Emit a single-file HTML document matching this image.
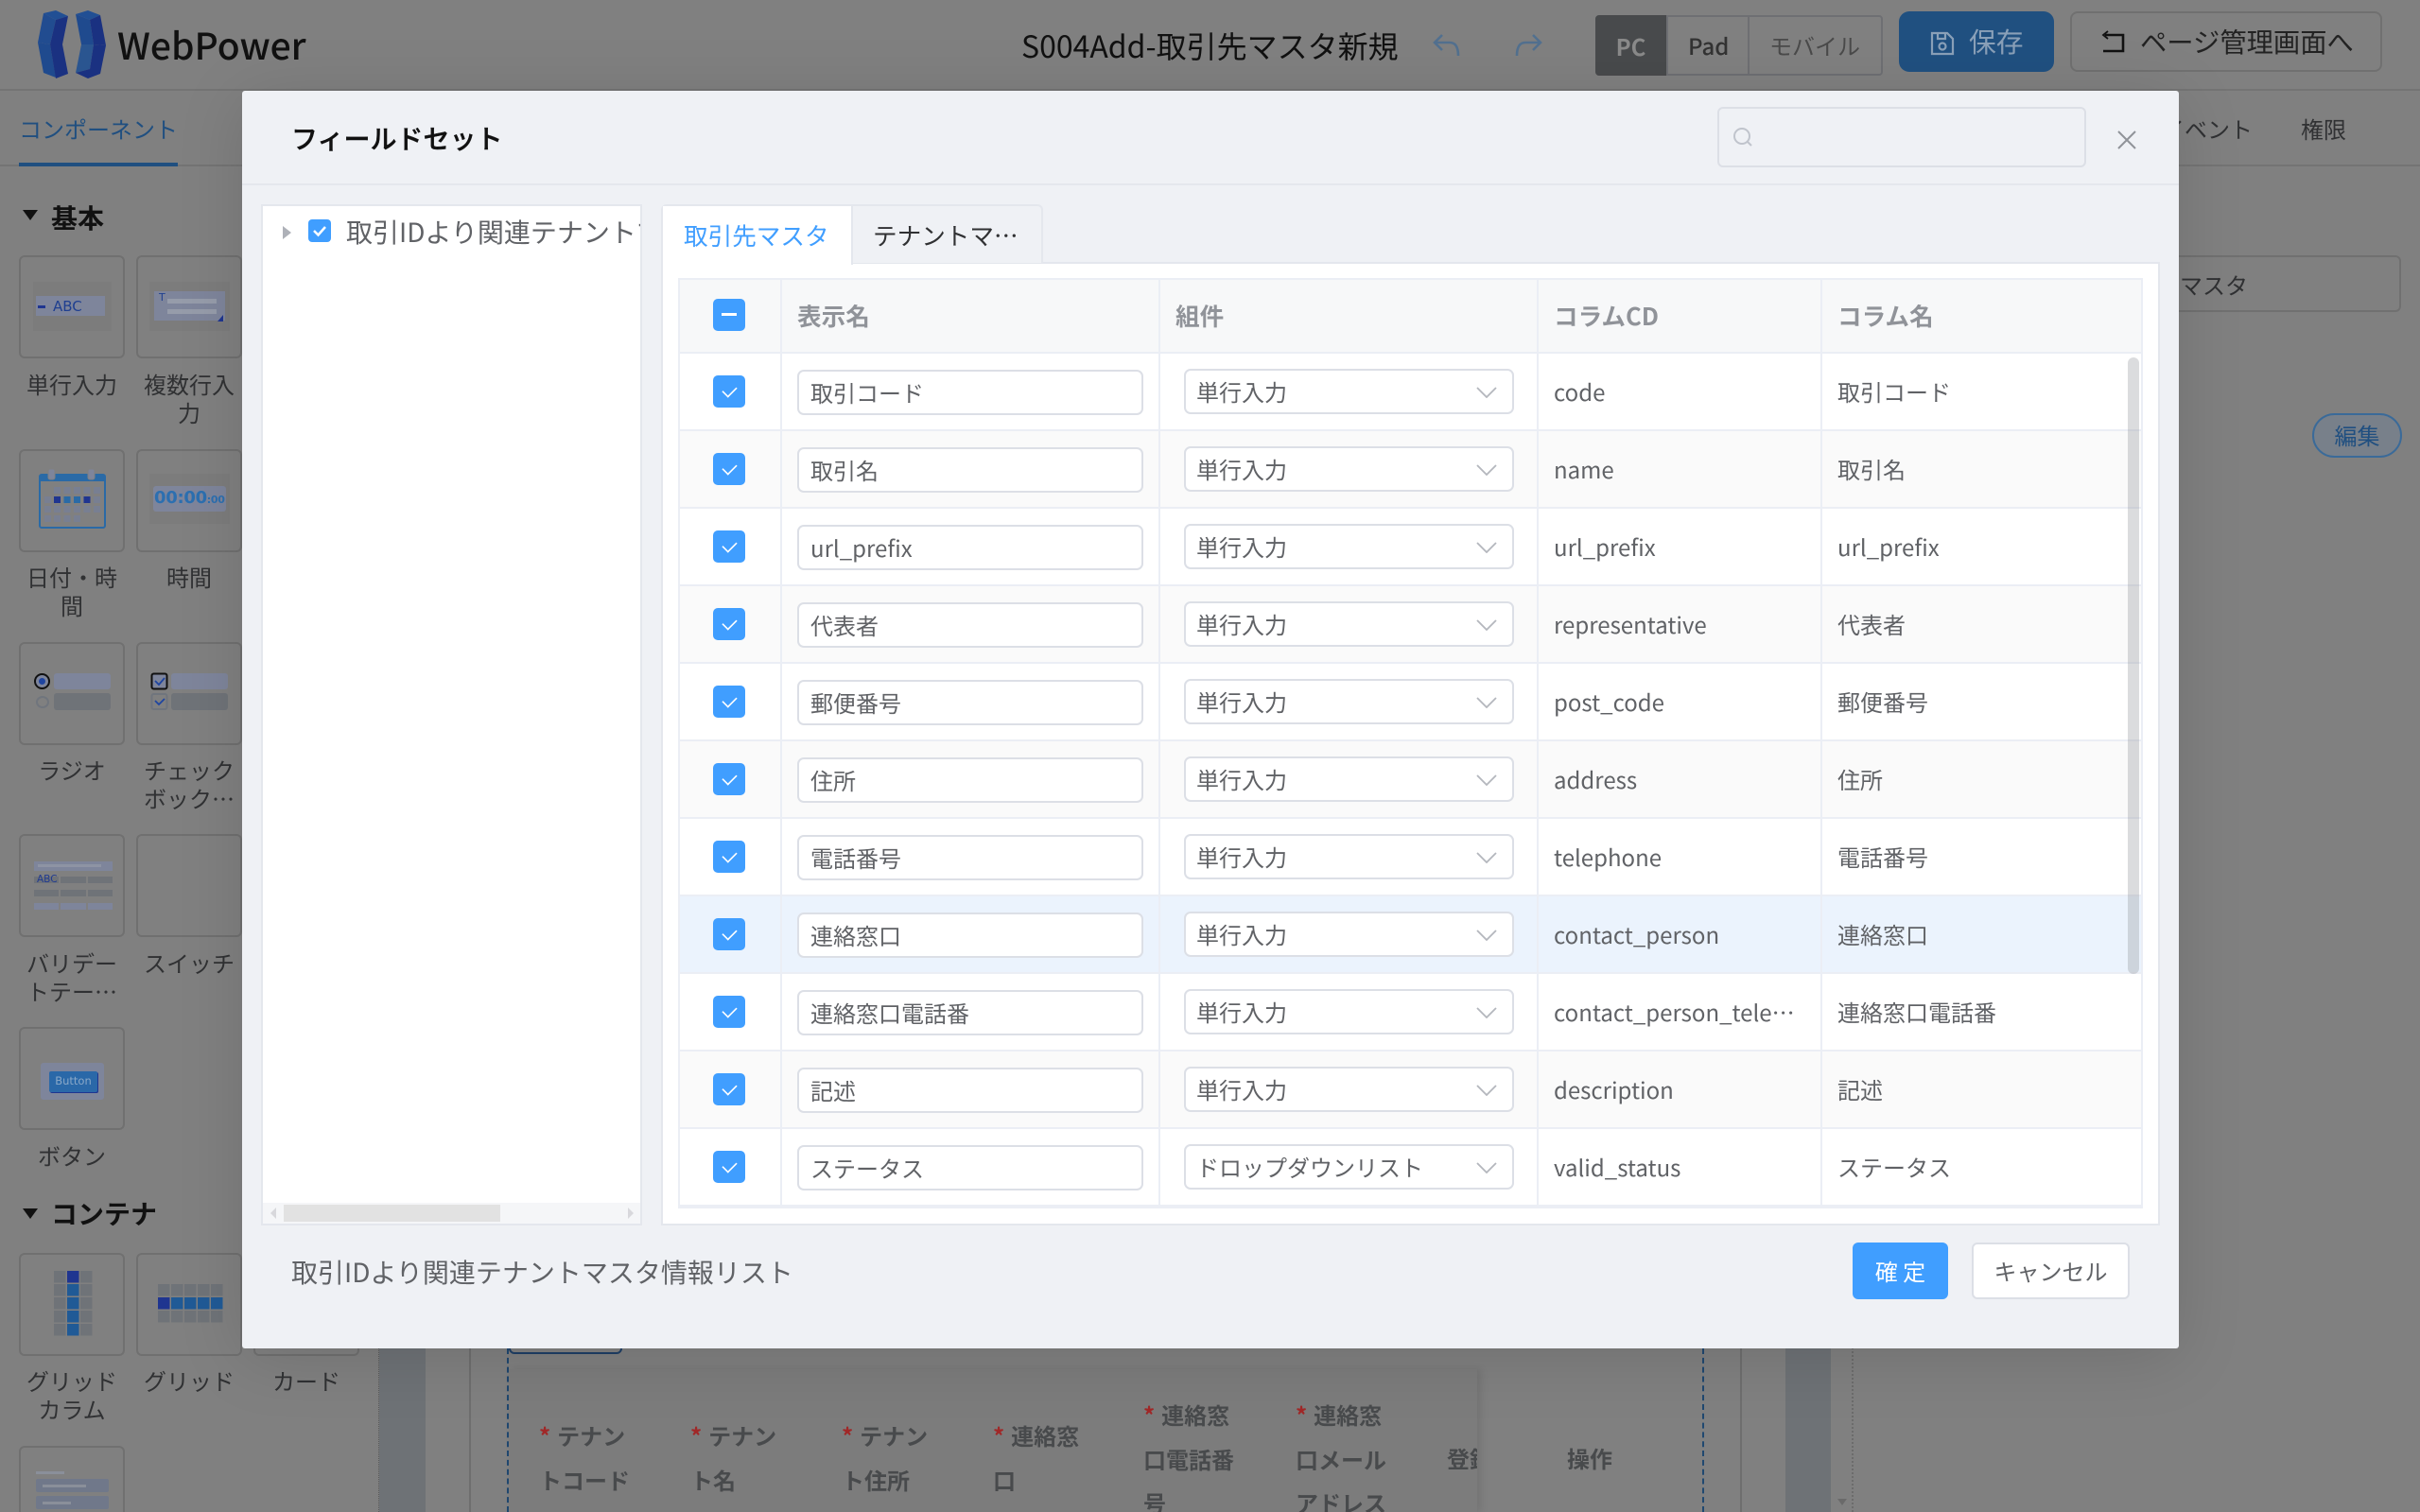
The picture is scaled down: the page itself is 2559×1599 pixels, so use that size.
<!DOCTYPE html>
<html lang="ja"><head><meta charset="utf-8"><title>WebPower</title>
<style>
*{box-sizing:border-box}
html,body{margin:0;padding:0;width:2559px;height:1599px;overflow:hidden;background:#808080}
body{font-family:"Noto Sans CJK JP","Liberation Sans",sans-serif;position:relative;color:#303133}
.a{position:absolute}
.t{position:absolute;white-space:nowrap;line-height:1}
.card{position:absolute;width:112px;height:109px;border:2px solid #707070;border-radius:6px}
.lb{position:absolute;width:112px;text-align:center;font-size:24px;line-height:30px;color:#303133}
.bl{background:#7e859b}.gr{background:#6f7378}
#modal{position:absolute;left:256px;top:96px;width:2048px;height:1330px;background:#eff1f5;border-radius:3px;box-shadow:0 10px 70px rgba(0,0,0,.13)}
table{position:absolute;left:717px;top:294px;width:1549px;border-collapse:separate;border-spacing:0;table-layout:fixed;border-top:2px solid #ebeef5;border-left:2px solid #ebeef5;border-right:2px solid #ebeef5;background:#fff}
th,td{padding:0 16px 2px;border-right:2px solid #ebeef5;border-bottom:2px solid #ebeef5;height:82px;font-size:24px;font-weight:400;color:#606266;text-align:left;white-space:nowrap;overflow:hidden;position:relative}
th:last-child,td:last-child{border-right:0}
th{height:78px;background:#f7f8f9;color:#909399;font-weight:700;font-size:25.6px}
tr.s td{background:#fafafa}
tr.h td{background:#ebf3fd}
.cb{position:absolute;left:35px;top:23px;width:34px;height:34px;border-radius:5px;background:#409eff}
.cb:after{content:"";position:absolute;left:12px;top:7px;width:9px;height:15px;border:solid #fff;border-width:0 2.5px 2.5px 0;transform:rotate(45deg) scale(.82)}
.cb.m{top:20px}
.cb.m:after{left:9px;top:15px;width:16px;height:3px;border:0;background:#fff;transform:none}
.in{position:absolute;left:16px;top:17px;width:366px;height:48px;border:2px solid #dcdfe6;border-radius:7px;background:#fff;font-size:24px;line-height:43px;padding-left:12px;color:#606266}
.se{position:absolute;left:25px;top:16px;width:349px;height:48px;border:2px solid #dcdfe6;border-radius:7px;background:#fff;font-size:24px;line-height:43px;padding-left:11px;color:#606266}
.se svg{position:absolute;right:16px;top:17px}
</style></head><body>

<!-- top header -->
<div class="a" style="left:0;top:94px;width:2559px;height:2px;background:#747474"></div>
<svg class="a" style="left:0;top:0" width="120" height="96" viewBox="0 0 120 96">
<polygon points="46,14 59,11 72,17 59,21" fill="#214f94"/>
<polygon points="46,14 59,21 53,47 40,45" fill="#214c90"/>
<polygon points="59,21 72,17 66,47 53,47" fill="#1a3181"/>
<polygon points="40,45 53,47 59,82 46,77" fill="#1f4a8e"/>
<polygon points="53,47 66,47 72,78 59,83" fill="#1a3181"/>
<polygon points="80,15 93,11 106,16 95,21" fill="#214f94"/>
<polygon points="80,15 95,21 99,47 86,47" fill="#1f4a8e"/>
<polygon points="95,21 106,16 112,48 99,47" fill="#1a3181"/>
<polygon points="86,47 99,47 95,73 80,77" fill="#2a5590"/>
<polygon points="99,47 112,48 106,78 93,83 80,77 95,73" fill="#1a3181"/>
</svg>
<div class="t" style="left:124px;top:23px;font-size:39px;color:#111;font-weight:500;line-height:48px">WebPower</div>
<div class="t" style="left:1080px;top:28px;font-size:32px;color:#111;line-height:40px">S004Add-取引先マスタ新規</div>
<svg class="a" style="left:1514px;top:34px" width="34" height="28" fill="none" stroke="#52708f" stroke-width="2.6"><path d="M11 3L3 11l8 8M3 11h16c6 0 9 5 9 14"/></svg>
<svg class="a" style="left:1598px;top:34px" width="34" height="28" fill="none" stroke="#52708f" stroke-width="2.6"><path d="M23 3l8 8-8 8M31 11H15c-6 0-9 5-9 14"/></svg>
<div class="a" style="left:1687px;top:16px;width:304px;height:64px;border:2px solid #6e6f73;border-radius:4px"></div>
<div class="a" style="left:1687px;top:16px;width:75px;height:64px;background:#484a4c;border-radius:4px 0 0 4px;color:#8a8a8a;font-size:24px;font-weight:700;text-align:center;line-height:66px">PC</div>
<div class="a" style="left:1848px;top:16px;width:2px;height:64px;background:#6e6f73"></div>
<div class="a" style="left:1762px;top:16px;width:2px;height:64px;background:#6e6f73"></div>
<div class="t" style="left:1785px;top:28px;font-size:24px;font-weight:500;line-height:40px;color:#333">Pad</div>
<div class="t" style="left:1871px;top:28px;font-size:24px;line-height:40px;color:#4a4a4a">モバイル</div>
<div class="a" style="left:2008px;top:12px;width:164px;height:64px;background:#205080;border-radius:11px"></div>
<svg class="a" style="left:2040px;top:32px" width="28" height="28" fill="none" stroke="#8aa0b8" stroke-width="2.2"><path d="M3 3h16l6 6v16H3zM9 3v6h8V3"/><circle cx="14" cy="17" r="3.5"/></svg>
<div class="t" style="left:2082px;top:24px;font-size:28.8px;line-height:40px;color:#8aa0b8">保存</div>
<div class="a" style="left:2189px;top:12px;width:330px;height:64px;border:2px solid #707070;border-radius:8px"></div>
<svg class="a" style="left:2220px;top:32px" width="30" height="26" fill="none" stroke="#111" stroke-width="2.6"><path d="M6 5h19v17H4"/><path d="M9 1L4 5l5 4" stroke-width="1.8"/></svg>
<div class="t" style="left:2263px;top:24px;font-size:28.3px;line-height:40px;color:#222">ページ管理画面へ</div>

<!-- sub tabs -->
<div class="a" style="left:0;top:174px;width:2559px;height:2px;background:#747474"></div>
<div class="t" style="left:20px;top:120px;font-size:24px;line-height:32px;color:#204f80">コンポーネント</div>
<div class="a" style="left:20px;top:172px;width:168px;height:4px;background:#204f80"></div>
<div class="t" style="left:2286px;top:120px;font-size:24px;line-height:32px;color:#303133">イベント</div>
<div class="t" style="left:2433px;top:120px;font-size:24px;line-height:32px;color:#303133">権限</div>
<div class="a" style="left:2200px;top:270px;width:339px;height:60px;border:2px solid #707070;border-radius:6px"></div>
<div class="t" style="left:2305px;top:285px;font-size:24px;line-height:32px;color:#303133">マスタ</div>
<div class="a" style="left:2445px;top:437px;width:95px;height:47px;border:2px solid #3a6a99;border-radius:24px;text-align:center;line-height:42px;font-size:24px;color:#204f80;background:#78808a">編集</div>

<!-- left panel -->
<div class="a" style="left:24px;top:222px;width:0;height:0;border:8px solid transparent;border-top:11px solid #111;border-bottom:0"></div>
<div class="t" style="left:54px;top:214px;font-size:28px;font-weight:700;line-height:32px;color:#111">基本</div>
<div class="a" style="left:24px;top:1278px;width:0;height:0;border:8px solid transparent;border-top:11px solid #111;border-bottom:0"></div>
<div class="t" style="left:54px;top:1267px;font-size:28px;font-weight:700;line-height:32px;color:#111">コンテナ</div>

<div class="card" style="left:20px;top:270px"></div>
<div class="a" style="left:35px;top:298px;width:83px;height:52px;background:#7c7c7c"></div>
<div class="a bl" style="left:38px;top:313px;width:73px;height:21px"></div>
<div class="a" style="left:40px;top:323px;width:8px;height:3px;background:#1f3590"></div>
<div class="t" style="left:56px;top:315px;font-size:15px;line-height:18px;color:#1f3f90;font-family:'DejaVu Sans',sans-serif">ABC</div>
<div class="lb" style="left:20px;top:391px">単行入力</div>

<div class="card" style="left:144px;top:270px"></div>
<div class="a" style="left:158px;top:298px;width:85px;height:52px;background:#7c7c7c"></div>
<div class="a bl" style="left:163px;top:308px;width:75px;height:31px"></div>
<div class="a" style="left:177px;top:316px;width:52px;height:5px;background:#969caa"></div>
<div class="a" style="left:177px;top:327px;width:52px;height:5px;background:#969caa"></div>
<div class="t" style="left:168px;top:309px;font-size:11px;color:#1f3f90;font-family:'DejaVu Sans',sans-serif">T</div>
<div class="a" style="left:230px;top:333px;width:0;height:0;border-left:6px solid transparent;border-bottom:7px solid #1f3590"></div>
<div class="lb" style="left:144px;top:391px">複数行入<br>力</div>

<div class="card" style="left:20px;top:475px"></div>
<svg class="a" style="left:38px;top:492px" width="76" height="70"><rect x="4" y="10" width="69" height="56" rx="2" fill="none" stroke="#2a6aa6" stroke-width="2"/><rect x="4" y="10" width="69" height="7" fill="#2a6aa6"/><rect x="13" y="4" width="7" height="11" rx="2" fill="#7e859b" stroke="#808080"/><rect x="55" y="4" width="7" height="11" rx="2" fill="#7e859b" stroke="#808080"/>
<g fill="#787f92"><rect x="19" y="23" width="7" height="7"/><rect x="29.500" y="23" width="7" height="7"/><rect x="40" y="23" width="7" height="7"/><rect x="50.500" y="23" width="7" height="7"/><rect x="61" y="23" width="7" height="7"/><rect x="9" y="33" width="7" height="7"/><rect x="61" y="33" width="7" height="7"/><rect x="9" y="43" width="7" height="7"/><rect x="19" y="43" width="7" height="7"/><rect x="29.500" y="43" width="7" height="7"/><rect x="40" y="43" width="7" height="7"/><rect x="50.500" y="43" width="7" height="7"/><rect x="61" y="43" width="7" height="7"/><rect x="9" y="53" width="7" height="7"/><rect x="19" y="53" width="7" height="7"/><rect x="29.500" y="53" width="7" height="7"/><rect x="40" y="53" width="7" height="7"/></g>
<rect x="19" y="33" width="7" height="7" fill="#1f3590"/><rect x="29.500" y="33" width="7" height="7" fill="#2a6aa6"/><rect x="40" y="33" width="7" height="7" fill="#2a6aa6"/><rect x="50.500" y="33" width="7" height="7" fill="#1f3590"/></svg>
<div class="lb" style="left:20px;top:595px">日付・時<br>間</div>

<div class="card" style="left:144px;top:475px"></div>
<div class="a" style="left:158px;top:501px;width:85px;height:53px;background:#7c7c7c"></div>
<div class="a bl" style="left:162px;top:514px;width:77px;height:27px;border-radius:3px"></div>
<div class="t" style="left:163px;top:517px;font:700 18px/20px 'DejaVu Sans',sans-serif;color:#2c6fb0;letter-spacing:-.3px">00:00<span style="font-size:11px">:00</span></div>
<div class="lb" style="left:144px;top:595px">時間</div>

<div class="card" style="left:20px;top:679px"></div>
<div class="a" style="left:36px;top:712px;width:17px;height:17px;border:2px solid #111;border-radius:50%;background:#7e859b"></div>
<div class="a" style="left:41px;top:717px;width:7px;height:7px;border-radius:50%;background:#1f45a0"></div>
<div class="a" style="left:38px;top:736px;width:14px;height:13px;border:2px solid #70757d;border-radius:50%"></div>
<div class="a bl" style="left:57px;top:712px;width:60px;height:17px;border-radius:3px"></div>
<div class="a gr" style="left:57px;top:733px;width:60px;height:18px;border-radius:3px"></div>
<div class="lb" style="left:20px;top:799px">ラジオ</div>

<div class="card" style="left:144px;top:679px"></div>
<svg class="a" style="left:159px;top:711px" width="20" height="42" fill="none"><rect x="1.500" y="1.500" width="16" height="16" rx="2" fill="#7e859b" stroke="#111" stroke-width="2"/><path d="M5 9l4 4 6-7" stroke="#1f45a0" stroke-width="1.800"/><rect x="1.500" y="23" width="16" height="16" rx="2" stroke="#70757d" stroke-width="2"/><path d="M5 30l4 4 6-6" stroke="#1f45a0" stroke-width="1.800"/></svg>
<div class="a bl" style="left:181px;top:712px;width:60px;height:17px;border-radius:3px"></div>
<div class="a gr" style="left:181px;top:733px;width:60px;height:18px;border-radius:3px"></div>
<div class="lb" style="left:144px;top:799px">チェック<br>ボック…</div>

<div class="card" style="left:20px;top:882px"></div>
<div class="a bl" style="left:36px;top:911px;width:83px;height:10px"></div>
<div class="a" style="left:40px;top:914px;width:67px;height:3px;background:#8e94a4"></div>
<div class="a gr" style="left:36px;top:927px;width:26px;height:7px"></div><div class="a gr" style="left:64px;top:927px;width:27px;height:7px"></div><div class="a gr" style="left:93px;top:927px;width:26px;height:7px"></div>
<div class="t" style="left:39px;top:925px;font:10.500px/11px 'DejaVu Sans',sans-serif;color:#203a90">ABC</div>
<div class="a gr" style="left:36px;top:941px;width:26px;height:7px"></div><div class="a gr" style="left:64px;top:941px;width:27px;height:7px"></div><div class="a gr" style="left:93px;top:941px;width:26px;height:7px"></div>
<div class="a bl" style="left:36px;top:955px;width:26px;height:7px"></div><div class="a bl" style="left:64px;top:955px;width:27px;height:7px"></div><div class="a bl" style="left:93px;top:955px;width:26px;height:7px"></div>
<div class="lb" style="left:20px;top:1003px">バリデー<br>トテー…</div>

<div class="card" style="left:144px;top:882px"></div>
<div class="lb" style="left:144px;top:1003px">スイッチ</div>

<div class="card" style="left:20px;top:1086px"></div>
<div class="a bl" style="left:43px;top:1124px;width:67px;height:39px;border-radius:3px"></div>
<div class="a" style="left:52px;top:1133px;width:51px;height:22px;background:#2a68a8;border-radius:2px;box-shadow:1px 1px 0 #1f3590;color:#8aa8c8;font:11.500px/21px 'DejaVu Sans',sans-serif;text-align:center">Button</div>
<div class="lb" style="left:20px;top:1207px">ボタン</div>

<div class="card" style="left:20px;top:1325px"></div>
<svg class="a" style="left:57px;top:1344px" width="42" height="70" fill="#6f7378">
<rect width="12.500" height="12.500"/><rect y="14" width="12.500" height="12.500"/><rect y="28" width="12.500" height="12.500"/><rect y="42" width="12.500" height="12.500"/><rect y="56" width="12.500" height="12.500"/>
<rect x="28" width="12.500" height="12.500"/><rect x="28" y="14" width="12.500" height="12.500"/><rect x="28" y="28" width="12.500" height="12.500"/><rect x="28" y="42" width="12.500" height="12.500"/><rect x="28" y="56" width="12.500" height="12.500"/>
<rect x="14" width="12.500" height="12.500" fill="#1f3590"/><g fill="#205a96"><rect x="14" y="14" width="12.500" height="12.500"/><rect x="14" y="28" width="12.500" height="12.500"/><rect x="14" y="42" width="12.500" height="12.500"/><rect x="14" y="56" width="12.500" height="12.500"/></g></svg>
<div class="lb" style="left:20px;top:1445px">グリッド<br>カラム</div>

<div class="card" style="left:144px;top:1325px"></div>
<svg class="a" style="left:167px;top:1358px" width="70" height="42" fill="#6f7378">
<rect width="12.500" height="12.500"/><rect x="14" width="12.500" height="12.500"/><rect x="28" width="12.500" height="12.500"/><rect x="42" width="12.500" height="12.500"/><rect x="56" width="12.500" height="12.500"/>
<rect y="28" width="12.500" height="12.500"/><rect x="14" y="28" width="12.500" height="12.500"/><rect x="28" y="28" width="12.500" height="12.500"/><rect x="42" y="28" width="12.500" height="12.500"/><rect x="56" y="28" width="12.500" height="12.500"/>
<rect y="14" width="12.500" height="12.500" fill="#1f3590"/><g fill="#205a96"><rect x="14" y="14" width="12.500" height="12.500"/><rect x="28" y="14" width="12.500" height="12.500"/><rect x="42" y="14" width="12.500" height="12.500"/><rect x="56" y="14" width="12.500" height="12.500"/></g></svg>
<div class="lb" style="left:144px;top:1445px">グリッド</div>

<div class="card" style="left:268px;top:1325px"></div>
<div class="lb" style="left:268px;top:1445px">カード</div>

<div class="card" style="left:20px;top:1529px;height:90px"></div>
<div class="a" style="left:38px;top:1556px;width:30px;height:3px;background:#8a8f9a"></div>
<div class="a" style="left:38px;top:1564px;width:77px;height:14px;background:#70788a;border-radius:2px"></div>
<div class="a" style="left:45px;top:1570px;width:46px;height:3px;background:#8a8f9a"></div>
<div class="a" style="left:38px;top:1582px;width:77px;height:14px;background:#70788a;border-radius:2px"></div>
<div class="a" style="left:45px;top:1588px;width:30px;height:3px;background:#8a8f9a"></div>

<!-- main bottom -->
<div class="a" style="left:400px;top:1400px;width:1px;height:199px;border-left:1px dotted #5a5a5a"></div>
<div class="a" style="left:401px;top:1400px;width:49px;height:199px;background:#6e7276"></div>
<div class="a" style="left:496px;top:1400px;width:2px;height:199px;background:#6e6e6e"></div>
<div class="a" style="left:1840px;top:1400px;width:2px;height:199px;background:#6e6e6e"></div>
<div class="a" style="left:1888px;top:1400px;width:48px;height:199px;background:#6e7276"></div>
<div class="a" style="left:1958px;top:1400px;width:1px;height:199px;border-left:2px dotted #6c6c6c"></div>
<div class="a" style="left:1943px;top:1585px;width:0;height:0;border:5px solid transparent;border-top:7px solid #6a6a6a;border-bottom:0"></div>
<div class="a" style="left:536px;top:1426px;width:0;height:173px;border-left:2px dashed #204870"></div>
<div class="a" style="left:1800px;top:1426px;width:0;height:173px;border-left:2px dashed #204870"></div>
<div class="a" style="left:538px;top:1400px;width:120px;height:32px;border:2px solid #1f3f66;border-radius:0 0 6px 6px"></div>
<div class="a" style="left:538px;top:1448px;width:1024px;height:151px;background:#7c7c7c;box-shadow:4px 0 8px rgba(0,0,0,.1)"></div>
<style>.h2{position:absolute;font-size:24px;font-weight:700;line-height:46.5px;color:#484a4c;white-space:nowrap}.h2 i{color:#a02828;font-style:normal;margin-right:7px}</style>
<div class="h2" style="left:570px;top:1495px"><i>*</i>テナン<br>トコード</div>
<div class="h2" style="left:730px;top:1495px"><i>*</i>テナン<br>ト名</div>
<div class="h2" style="left:890px;top:1495px"><i>*</i>テナン<br>ト住所</div>
<div class="h2" style="left:1050px;top:1495px"><i>*</i>連絡窓<br>口</div>
<div class="h2" style="left:1209px;top:1473px"><i>*</i>連絡窓<br>口電話番<br>号</div>
<div class="h2" style="left:1370px;top:1473px"><i>*</i>連絡窓<br>口メール<br>アドレス</div>
<div class="a" style="left:1530px;top:1519px;width:32px;height:46px;overflow:hidden"><div class="h2" style="left:0;top:0">登録</div></div>
<div class="h2" style="left:1657px;top:1519px">操作</div>

<!-- modal -->
<div id="modal"></div>
<div class="a" style="left:256px;top:194px;width:2048px;height:2px;background:#e4e7ed"></div>
<div class="t" style="left:308px;top:126px;font-size:28px;font-weight:500;line-height:40px;color:#111;-webkit-text-stroke:.4px #111">フィールドセット</div>
<div class="a" style="left:1816px;top:113px;width:390px;height:64px;border:2px solid #dcdfe6;border-radius:6px"></div>
<svg class="a" style="left:1832px;top:133px" width="22" height="24" fill="none" stroke="#c0c4cc" stroke-width="2"><circle cx="10" cy="11" r="8"/><path d="M16 17l4 4"/></svg>
<svg class="a" style="left:2239px;top:137px" width="20" height="22" fill="none" stroke="#909399" stroke-width="2"><path d="M1 2l18 18M19 2L1 20"/></svg>

<!-- tree -->
<div class="a" style="left:276px;top:216px;width:403px;height:1080px;border:2px solid #e4e7ed;background:#fff;overflow:hidden">
  <div class="a" style="left:21px;top:21px;width:0;height:0;border-left:9px solid #aeb1b8;border-top:7px solid transparent;border-bottom:7px solid transparent"></div>
  <div class="a" style="left:48px;top:14px;width:24px;height:24px;background:#409eff;border-radius:4px"></div>
  <svg class="a" style="left:48px;top:14px" width="24" height="24" fill="none" stroke="#fff" stroke-width="2.500"><path d="M6 12l4.500 4.500L18 8"/></svg>
  <div class="t" style="left:88px;top:9px;font-size:28px;line-height:36px;color:#606266">取引IDより関連テナントマスタ情報リスト</div>
  <div class="a" style="left:0;top:1054px;width:399px;height:22px;background:#f5f6f8"></div>
  <div class="a" style="left:22px;top:1056px;width:229px;height:18px;background:#e2e2e2"></div>
  <div class="a" style="left:8px;top:1059px;width:0;height:0;border-right:6px solid #d8d8dc;border-top:6px solid transparent;border-bottom:6px solid transparent"></div>
  <div class="a" style="left:386px;top:1059px;width:0;height:0;border-left:6px solid #d8d8dc;border-top:6px solid transparent;border-bottom:6px solid transparent"></div>
</div>

<!-- tabs -->
<div class="a" style="left:699px;top:277px;width:1585px;height:1019px;background:#fff;border:2px solid #e4e7ed"></div>
<div class="a" style="left:699px;top:216px;width:404px;height:62px;border:2px solid #e4e7ed;border-bottom:0;border-radius:6px 6px 0 0;background:#eff1f5"></div>
<div class="a" style="left:701px;top:218px;width:201px;height:62px;background:#fff;border-right:2px solid #e4e7ed"></div>
<div class="t" style="left:723px;top:231px;font-size:25.6px;line-height:36px;color:#409eff">取引先マスタ</div>
<div class="t" style="left:923px;top:231px;font-size:25.6px;line-height:36px;color:#303133">テナントマ…</div>

<table>
<colgroup><col style="width:108px"><col style="width:400px"><col style="width:400px"><col style="width:300px"><col></colgroup>
<tr><th><div class="cb m"></div></th><th>表示名</th><th>組件</th><th>コラムCD</th><th>コラム名</th></tr>
<tr><td><div class="cb"></div></td><td><div class="in">取引コード</div></td><td><div class="se">単行入力<svg width="22" height="12" fill="none" stroke="#b4b7bd" stroke-width="1.800"><path d="M1 1l10 10L21 1"/></svg></div></td><td>code</td><td>取引コード</td></tr>
<tr class="s"><td><div class="cb"></div></td><td><div class="in">取引名</div></td><td><div class="se">単行入力<svg width="22" height="12" fill="none" stroke="#b4b7bd" stroke-width="1.800"><path d="M1 1l10 10L21 1"/></svg></div></td><td>name</td><td>取引名</td></tr>
<tr><td><div class="cb"></div></td><td><div class="in">url_prefix</div></td><td><div class="se">単行入力<svg width="22" height="12" fill="none" stroke="#b4b7bd" stroke-width="1.800"><path d="M1 1l10 10L21 1"/></svg></div></td><td>url_prefix</td><td>url_prefix</td></tr>
<tr class="s"><td><div class="cb"></div></td><td><div class="in">代表者</div></td><td><div class="se">単行入力<svg width="22" height="12" fill="none" stroke="#b4b7bd" stroke-width="1.800"><path d="M1 1l10 10L21 1"/></svg></div></td><td>representative</td><td>代表者</td></tr>
<tr><td><div class="cb"></div></td><td><div class="in">郵便番号</div></td><td><div class="se">単行入力<svg width="22" height="12" fill="none" stroke="#b4b7bd" stroke-width="1.800"><path d="M1 1l10 10L21 1"/></svg></div></td><td>post_code</td><td>郵便番号</td></tr>
<tr class="s"><td><div class="cb"></div></td><td><div class="in">住所</div></td><td><div class="se">単行入力<svg width="22" height="12" fill="none" stroke="#b4b7bd" stroke-width="1.800"><path d="M1 1l10 10L21 1"/></svg></div></td><td>address</td><td>住所</td></tr>
<tr><td><div class="cb"></div></td><td><div class="in">電話番号</div></td><td><div class="se">単行入力<svg width="22" height="12" fill="none" stroke="#b4b7bd" stroke-width="1.800"><path d="M1 1l10 10L21 1"/></svg></div></td><td>telephone</td><td>電話番号</td></tr>
<tr class="h"><td><div class="cb"></div></td><td><div class="in">連絡窓口</div></td><td><div class="se">単行入力<svg width="22" height="12" fill="none" stroke="#b4b7bd" stroke-width="1.800"><path d="M1 1l10 10L21 1"/></svg></div></td><td>contact_person</td><td>連絡窓口</td></tr>
<tr><td><div class="cb"></div></td><td><div class="in">連絡窓口電話番</div></td><td><div class="se">単行入力<svg width="22" height="12" fill="none" stroke="#b4b7bd" stroke-width="1.800"><path d="M1 1l10 10L21 1"/></svg></div></td><td>contact_person_tele…</td><td>連絡窓口電話番</td></tr>
<tr class="s"><td><div class="cb"></div></td><td><div class="in">記述</div></td><td><div class="se">単行入力<svg width="22" height="12" fill="none" stroke="#b4b7bd" stroke-width="1.800"><path d="M1 1l10 10L21 1"/></svg></div></td><td>description</td><td>記述</td></tr>
<tr><td><div class="cb"></div></td><td><div class="in">ステータス</div></td><td><div class="se">ドロップダウンリスト<svg width="22" height="12" fill="none" stroke="#b4b7bd" stroke-width="1.800"><path d="M1 1l10 10L21 1"/></svg></div></td><td>valid_status</td><td>ステータス</td></tr>
</table>
<div class="a" style="left:717px;top:1274px;width:1549px;height:4px;background:#ebeef5"></div>
<div class="a" style="left:2250px;top:378px;width:12px;height:652px;background:rgba(144,147,153,.32);border-radius:6px"></div>

<!-- footer -->
<div class="t" style="left:308px;top:1327px;font-size:28px;line-height:36px;color:#606266">取引IDより関連テナントマスタ情報リスト</div>
<div class="a" style="left:1959px;top:1314px;width:101px;height:60px;background:#409eff;border-radius:6px;color:#fff;font-size:24px;line-height:59px;text-align:center">確 定</div>
<div class="a" style="left:2085px;top:1314px;width:167px;height:60px;background:#fff;border:2px solid #dcdfe6;border-radius:6px;color:#606266;font-size:24px;line-height:55px;text-align:center">キャンセル</div>
</body></html>
